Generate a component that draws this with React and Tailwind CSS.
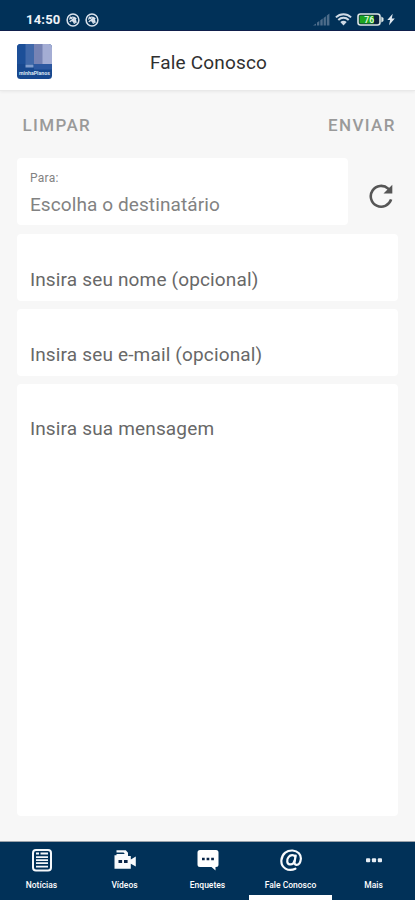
import React from "react";

function SyncBadge() {
  return (
    <svg className="h-[14px] w-[14px]" viewBox="0 0 14 14" fill="none" stroke="#d9e2ec" strokeWidth="1.5">
      <circle cx="7" cy="7" r="5.9" />
      <path d="M3.4 6.6C4.6 3.6 8.4 3.4 10.3 6.2M3.8 9C5.6 6.4 7.4 7.4 8.6 10.8M3.8 3.8l6.6 6.2M7 5.6c1.6 0 2.8 1.6 3 3.4" strokeWidth="1.3" />
    </svg>
  );
}

function StatusBar() {
  return (
    <div className="flex h-[31px] shrink-0 items-start justify-between border-b border-[#10204d] bg-[#013158] pl-[26px] pr-[20px] pt-[12px]">
      <div className="flex h-[15px] items-center">
        <span className="w-[40px] whitespace-nowrap text-[13px] font-bold leading-[15px] tracking-[0.2px] text-[#eef3f8]">14:50</span>
        <SyncBadge />
        <span className="w-[5px]" />
        <SyncBadge />
      </div>
      <div className="flex h-[15px] items-center">
        <svg className="mr-[5px] h-[13px] w-[17px]" viewBox="0 0 17 13" fill="#4c6c8a">
          <path d="M0 12.5L3 10.5v2zM4 9.5l2.3-1.6v4.6H4zM7.3 7.3l2.4-1.8v7H7.3zM10.6 5l2.3-1.8v9.3h-2.3zM13.8 2.4L16.4.5v12h-2.6z" />
        </svg>
        <svg className="mr-[5px] h-[13px] w-[17px]" viewBox="0 0 17 13" fill="none" stroke="#cfdae5" strokeWidth="2">
          <path d="M.9 4.4C5.3.2 11.7.2 16.1 4.4M3.3 7c3-2.9 7.4-2.9 10.4 0" />
          <path d="M5.3 9.1c2-1.7 4.4-1.7 6.4 0L8.5 12.4z" fill="#cfdae5" stroke="none" />
        </svg>
        <svg className="mr-[3px] h-[13px] w-[27px]" viewBox="0 0 27 13">
          <rect x="1" y="1" width="22" height="11" rx="2.5" fill="#0b2440" stroke="#dbe5e4" strokeWidth="1.6" />
          <path d="M24.3 3.5l2.2 1.5v3l-2.2 1.5z" fill="#dbe5e4" />
          <rect x="2.5" y="2.5" width="14.5" height="8" rx="1" fill="#1ba51f" />
          <text x="12.2" y="9.8" textAnchor="middle" fontFamily="Roboto, sans-serif" fontWeight="700" fontSize="8.5" fill="#d9f7d3">76</text>
        </svg>
        <svg className="h-[13px] w-[8px]" viewBox="0 0 8 13" fill="#dfe8f0">
          <path d="M5.7.8L.3 7h2.8L2 12.2 7.8 5.6H4.8z" />
        </svg>
      </div>
    </div>
  );
}

function Logo() {
  return (
    <svg className="mt-[2px] h-[35px] w-[35px]" viewBox="0 0 35 35">
      <defs>
        <clipPath id="logoShape"><rect width="35" height="35" rx="3.5" /></clipPath>
      </defs>
      <g clipPath="url(#logoShape)">
        <rect width="35" height="35" fill="#17488f" />
        <rect width="9" height="20" fill="#1c4f98" />
        <rect x="8.5" width="9" height="20" fill="#4169aa" />
        <rect x="17" width="9" height="20" fill="#7783b4" />
        <rect x="25.5" width="10" height="20" fill="#a4add4" />
        <rect x="8.5" y="20.5" width="8" height="3" fill="#7f9bcc" />
        <rect x="17" y="20" width="18" height="5.5" fill="#2d58a0" />
        <text x="2" y="31.3" fontFamily="Roboto, sans-serif" fontSize="6" fontWeight="700" fill="#dbe5f3" textLength="31" lengthAdjust="spacingAndGlyphs">minhaPlanos</text>
      </g>
    </svg>
  );
}

function Header() {
  return (
    <header className="grid h-[60px] shrink-0 grid-cols-[1fr_auto_1fr] items-center border-b border-[#e9e9e9] bg-white px-[17px] shadow-[0_1px_3px_rgba(0,0,0,0.06)]">
      <Logo />
      <h1 className="pl-[2px] pt-[4px] text-[19px] leading-6 tracking-[0.18px] text-[#303030]">Fale Conosco</h1>
    </header>
  );
}

function Field({ label, className }) {
  return (
    <div className={"rounded-[4px] bg-white pl-[12.5px] text-[19px] leading-6 tracking-[0.16px] text-[#686868] " + className}>
      {label}
    </div>
  );
}

function NewsIcon() {
  return (
    <svg className="h-[24px] w-[24px]" viewBox="0 0 24 24" fill="none" stroke="#f5f8fb">
      <rect x="3" y="2" width="18" height="20.4" rx="3" strokeWidth="2" />
      <path d="M6 5.5h3M10.5 5.5H18M6 9.2h12M6 12.2h12M6 15.2h12M6 18.6h12" strokeWidth="1.8" />
    </svg>
  );
}

function VideoIcon() {
  return (
    <svg className="h-[24px] w-[24px]" viewBox="0 0 24 24" fill="#f8fafc">
      <path d="M3.5 2.3h9.3L15 4.7V8h2.8v3.4l5-2.8v9.8l-5-2.6v5H1.5V7.2h2V5.9h8.3L10.6 4.4H3.5z" />
      <path d="M5.5 12h3.6v3H5.5zM11 12h3.6v3H11z" fill="#082447" />
    </svg>
  );
}

function PollIcon() {
  return (
    <svg className="h-[24px] w-[24px]" viewBox="0 0 24 24">
      <path d="M4 2h16a2.5 2.5 0 0 1 2.5 2.5v12A2.5 2.5 0 0 1 20 19h-.5v3.5L15.5 19H4a2.5 2.5 0 0 1-2.5-2.5v-12A2.5 2.5 0 0 1 4 2z" fill="#fff" />
      <path d="M6 9.7h2.7v2.5H6zM10.6 9.7h2.7v2.5h-2.7zM15.2 9.7h2.7v2.5h-2.7z" fill="#082447" />
    </svg>
  );
}

function AtIcon() {
  return (
    <svg className="h-[24px] w-[24px]" viewBox="0 0 24 24" fill="none" stroke="#f8fafc" strokeLinecap="round">
      <path d="M16.4 20.7C9.3 24.1 1.7 19.8 2.4 12.2 3.1 5.3 8.3 2.2 13.6 2.5c5.3.3 8.7 4 8.2 8.6-.4 3.8-2.4 5.8-4.4 5.7-1.8-.1-2.1-1.5-1.8-3.3l1.1-6" strokeWidth="2.2" />
      <path d="M16.2 8.7c-1.1-2-4.6-2.5-6.7.4-2.2 2.9-1.5 7 1.2 7.3 2.2.3 4.2-1.4 4.9-3.7" strokeWidth="2.2" />
    </svg>
  );
}

function MoreIcon() {
  return (
    <svg className="h-[24px] w-[24px]" viewBox="0 0 24 24" fill="#e7eef5">
      <rect x="4" y="10.3" width="4.2" height="4" rx="1" />
      <rect x="9.9" y="10.3" width="4.2" height="4" rx="1" />
      <rect x="15.8" y="10.3" width="4.2" height="4" rx="1" />
    </svg>
  );
}

const tabs = [
  { label: "Notícias", Icon: NewsIcon },
  { label: "Vídeos", Icon: VideoIcon },
  { label: "Enquetes", Icon: PollIcon },
  { label: "Fale Conosco", Icon: AtIcon, active: true },
  { label: "Mais", Icon: MoreIcon },
];

export default function App() {
  return (
    <div className="flex h-[900px] w-[415px] flex-col overflow-hidden bg-[#f7f7f7] font-[Roboto,sans-serif]">
      <StatusBar />
      <Header />
      <main className="flex min-h-0 flex-1 flex-col pb-[25px] pl-[17.4px] pr-[16.6px]">
        <div className="flex h-[67px] shrink-0 items-center justify-between pl-[5px] pr-[2.5px] pt-[2px] text-[17px] font-medium tracking-[1.4px] text-[#9a9a9a]">
          <button>LIMPAR</button>
          <button>ENVIAR</button>
        </div>
        <div className="mb-[9px] flex h-[67px] shrink-0">
          <div className="w-[331px] rounded-[4px] bg-white pl-[12.5px] pt-[13px] text-[#828282]">
            <div className="text-[12px] leading-[15px] tracking-[0.3px]">Para:</div>
            <div className="mt-[7px] text-[19px] leading-6 tracking-[0.1px]">Escolha o destinatário</div>
          </div>
          <button className="flex flex-1 items-center justify-center pl-[15px] pt-[8px]">
            <svg className="h-[26px] w-[26px]" viewBox="0 0 26 26" fill="none" stroke="#565656" strokeWidth="2.6">
              <path d="M23.1 16.4A10.4 10.4 0 1 1 20.2 5.6l2 2" />
              <path d="M24.3 1.8v8.8h-8.8z" fill="#565656" stroke="none" />
            </svg>
          </button>
        </div>
        <Field label="Insira seu nome (opcional)" className="mb-[8px] h-[67px] shrink-0 pt-[34px]" />
        <Field label="Insira seu e-mail (opcional)" className="mb-[8px] h-[67px] shrink-0 pt-[34px]" />
        <Field label="Insira sua mensagem" className="flex-1 pt-[33px]" />
      </main>
      <nav className="grid h-[59px] shrink-0 grid-cols-5 border-t border-[#9ba2aa] bg-[#013158]">
        {tabs.map(({ label, Icon, active }) => (
          <button key={label} className="flex flex-col items-center pt-[6px] text-[8.5px] font-medium leading-[10px] text-white">
            <Icon />
            <span className="mt-[8px] whitespace-nowrap">{label}</span>
            {active && <span className="mt-auto h-[5px] w-full bg-white" />}
          </button>
        ))}
      </nav>
    </div>
  );
}
